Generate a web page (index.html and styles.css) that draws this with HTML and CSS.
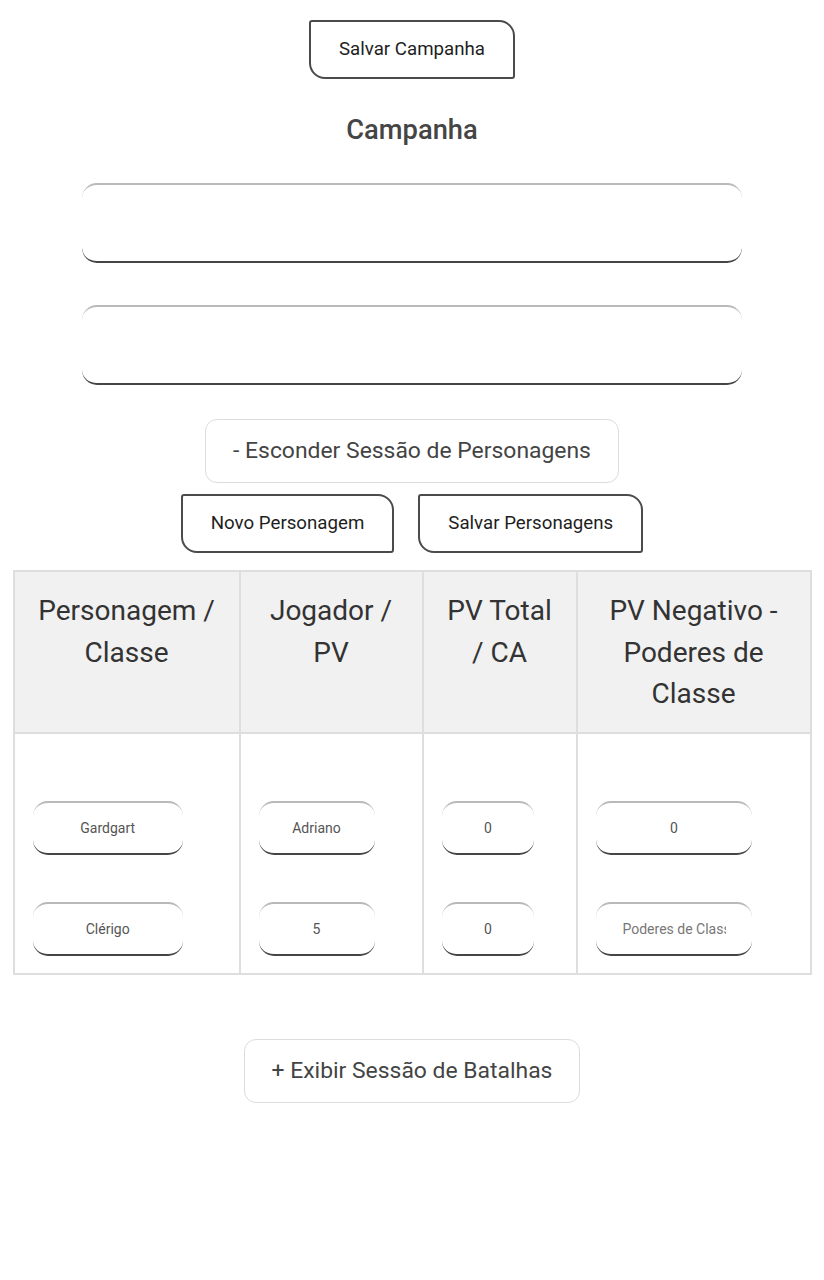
FILE: index.html
```html
<!DOCTYPE html>
<html lang="pt">
<head>
<meta charset="utf-8">
<title>Campanha</title>
<link rel="stylesheet" href="styles.css">
</head>
<body>
<main class="page">
  <button class="btn btn-top">Salvar Campanha</button>
  <h2 class="title">Campanha</h2>
  <input class="field field-big" type="text">
  <input class="field field-big field-second" type="text">
  <button class="toggle toggle-chars">- Esconder Sessão de Personagens</button>
  <div class="btn-row">
    <button class="btn">Novo Personagem</button>
    <button class="btn">Salvar Personagens</button>
  </div>
  <table class="chars">
    <colgroup>
      <col class="c1"><col class="c2"><col class="c3"><col class="c4">
    </colgroup>
    <thead>
      <tr>
        <th>Personagem / Classe</th>
        <th>Jogador / PV</th>
        <th>PV Total / CA</th>
        <th>PV Negativo - Poderes de Classe</th>
      </tr>
    </thead>
    <tbody>
      <tr>
        <td>
          <input class="field field-cell" type="text" value="Gardgart">
          <input class="field field-cell" type="text" value="Clérigo">
        </td>
        <td>
          <input class="field field-cell" type="text" value="Adriano">
          <input class="field field-cell" type="text" value="5">
        </td>
        <td>
          <input class="field field-cell" type="text" value="0">
          <input class="field field-cell" type="text" value="0">
        </td>
        <td>
          <input class="field field-cell" type="text" value="0">
          <input class="field field-cell field-long" type="text" placeholder="Poderes de Classe">
        </td>
      </tr>
    </tbody>
  </table>
  <button class="toggle toggle-battles">+ Exibir Sessão de Batalhas</button>
</main>
</body>
</html>
```

FILE: styles.css
```css
html, body {
  margin: 0;
  padding: 0;
  background: #ffffff;
}

body {
  font-family: Roboto, "Liberation Sans", Arial, sans-serif;
  color: #222;
}

.page {
  display: flex;
  flex-direction: column;
  align-items: center;
  padding-top: 20px;
}

.btn {
  font-family: Roboto, "Liberation Sans", Arial, sans-serif;
  font-size: 18.7px;
  line-height: 21px;
  color: #1e1e1e;
  background: #fff;
  border: 2px solid #4b4b4b;
  border-radius: 3px 16px 3px 16px;
  padding: 17px 28px;
  cursor: pointer;
}

.title {
  font-size: 27.3px;
  font-weight: 500;
  line-height: 30px;
  color: #454545;
  margin: 36px 0 38px;
}

.field {
  font-family: Roboto, "Liberation Sans", Arial, sans-serif;
  box-sizing: border-box;
  background: #fff;
  border: none;
  border-top: 2px solid #b9b9b9;
  border-bottom: 2px solid #454545;
  border-radius: 15px;
  text-align: center;
  color: #555;
  outline: none;
}

.field-big {
  width: 660px;
  height: 80px;
  font-size: 18px;
}

.field-second {
  margin-top: 42px;
}

.toggle {
  font-family: Roboto, "Liberation Sans", Arial, sans-serif;
  font-size: 22.9px;
  line-height: 26px;
  color: #444;
  background: #fff;
  border: 1px solid #dcdcdc;
  border-radius: 12px;
  padding: 18px 27px;
  cursor: pointer;
}

.toggle-chars {
  margin-top: 34px;
}

.btn-row {
  display: flex;
  gap: 24px;
  margin-top: 11px;
}

.chars {
  margin-top: 17px;
  width: 797px;
  table-layout: fixed;
  border-collapse: collapse;
  border: 2px solid #dedede;
}

.c1 { width: 226px; }
.c2 { width: 183px; }
.c3 { width: 154px; }
.c4 { width: 234px; }

.chars th {
  background: #f1f1f1;
  border: 2px solid #dedede;
  font-size: 28px;
  font-weight: 400;
  line-height: 41.5px;
  color: #333;
  padding: 18px 20px 17px;
  vertical-align: top;
  text-align: center;
}

.chars td {
  border: 2px solid #dedede;
  padding: 67px 18px 17px;
  vertical-align: top;
}

.field-cell {
  display: block;
  width: 80%;
  height: 54px;
  font-size: 14px;
  padding: 0 27px;
  text-overflow: clip;
}

.field-long {
  padding-right: 26.6px;
}

.field-cell + .field-cell {
  margin-top: 47px;
}

.field-cell::placeholder {
  color: #777;
  opacity: 1;
}

.toggle-battles {
  margin-top: 64px;
}
```
